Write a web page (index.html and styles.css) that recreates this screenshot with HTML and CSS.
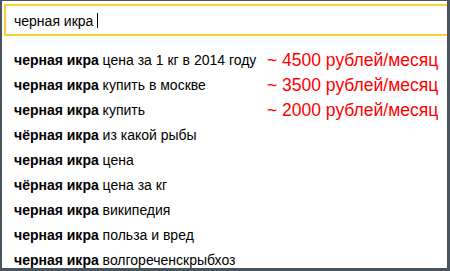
FILE: index.html
```html
<!DOCTYPE html>
<html>
<head>
<meta charset="utf-8">
<link rel="stylesheet" href="styles.css">
</head>
<body>
<div class="panel">
  <div class="search"><span class="query">черная икра </span><span class="cursor"></span></div>
  <div class="list">
    <div class="sug"><b>черная икра</b> цена за 1 кг в 2014 году</div><div class="price">~ 4500 рублей/месяц</div>
    <div class="sug"><b>черная икра</b> купить в москве</div><div class="price">~ 3500 рублей/месяц</div>
    <div class="sug"><b>черная икра</b> купить</div><div class="price">~ 2000 рублей/месяц</div>
    <div class="sug"><b>чёрная икра</b> из какой рыбы</div><div></div>
    <div class="sug"><b>черная икра</b> цена</div><div></div>
    <div class="sug"><b>чёрная икра</b> цена за кг</div><div></div>
    <div class="sug"><b>черная икра</b> википедия</div><div></div>
    <div class="sug"><b>черная икра</b> польза и вред</div><div></div>
    <div class="sug"><b>черная икра</b> волгореченскрыбхоз</div><div></div>
  </div>
</div>
</body>
</html>
```
FILE: styles.css
```css
html, body {
  margin: 0;
  padding: 0;
}
body {
  background: #4a545d;
  width: 450px;
  height: 271px;
  overflow: hidden;
  font-family: "Liberation Sans", Arial, sans-serif;
}
.panel {
  margin: 1px 3px 0 2px;
  height: 267px;
  background: #fff;
  overflow: hidden;
}
.search {
  margin: 3px 0 0 2px;
  width: 500px;
  height: 28px;
  border: 2px solid #fdd031;
  border-right: none;
  padding-left: 8px;
  display: flex;
  align-items: center;
  font-size: 14px;
  color: #000;
}
.query {
  white-space: pre;
  padding-top: 2px;
}
.cursor {
  width: 1px;
  height: 15px;
  background: #000;
}
.list {
  margin-top: 12px;
  padding-left: 12px;
  display: grid;
  grid-template-columns: 253px auto;
  grid-auto-rows: 25px;
}
.sug {
  font-size: 14px;
  line-height: 25px;
  color: #000;
  white-space: nowrap;
}
.price {
  font-size: 17.5px;
  line-height: 25px;
  color: #ff0000;
  white-space: nowrap;
}
```
